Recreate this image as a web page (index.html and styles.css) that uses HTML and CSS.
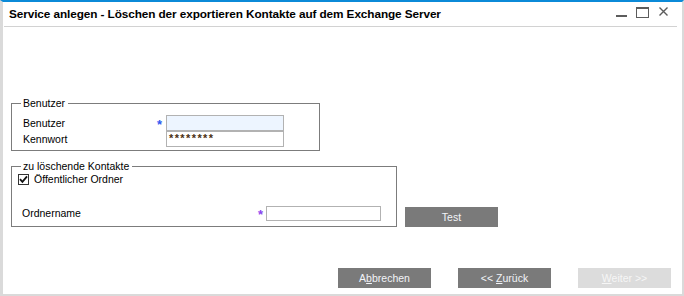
FILE: index.html
```html
<!DOCTYPE html>
<html lang="de">
<head>
    <meta charset="UTF-8">
    <title>Service anlegen</title>
    <link rel="stylesheet" href="styles.css">
</head>
<body>
    <div class="window">
        <div class="titlebar">
            <span class="title">Service anlegen - Löschen der exportieren Kontakte auf dem Exchange Server</span>
            <svg class="controls" width="65" height="24" viewBox="0 0 65 24">
                <rect x="4" y="13" width="11" height="2" fill="#5c5c5c"/>
                <rect x="24.5" y="5.5" width="12" height="10" fill="none" stroke="#5c5c5c"/>
                <rect x="24" y="5" width="13" height="2" fill="#5c5c5c"/>
                <path d="M47.5 5.5 L55.5 13.5 M55.5 5.5 L47.5 13.5" stroke="#5c5c5c" stroke-width="1.4"/>
            </svg>
        </div>

        <div class="content">
            <fieldset class="group group-user">
                <legend>Benutzer</legend>
                <div class="form-grid user-grid">
                    <span class="label">Benutzer</span>
                    <span class="required">*</span>
                    <span class="field field-focus"></span>

                    <span class="label">Kennwort</span>
                    <span></span>
                    <span class="field field-pass">********</span>
                </div>
            </fieldset>

            <div class="contacts-row">
                <fieldset class="group group-contacts">
                    <legend>zu löschende Kontakte</legend>
                    <div class="check-row">
                        <span class="checkbox">
                            <svg width="9" height="9" viewBox="0 0 9 9"><path d="M1 4.2 L3.4 6.8 L8 1.3" fill="none" stroke="#111" stroke-width="1.8"/></svg>
                        </span>
                        <span class="label">Öffentlicher Ordner</span>
                    </div>
                    <div class="form-grid folder-grid">
                        <span class="label">Ordnername</span>
                        <span class="required required-alt">*</span>
                        <span class="field field-folder"></span>
                    </div>
                </fieldset>
                <button class="btn">Test</button>
            </div>

            <div class="footer">
                <button class="btn">A<u>b</u>brechen</button>
                <button class="btn">&lt;&lt; <u>Z</u>urück</button>
                <button class="btn btn-disabled"><u>W</u>eiter &gt;&gt;</button>
            </div>
        </div>
    </div>
</body>
</html>
```

FILE: styles.css
```css
body {
    margin: 0;
    font-family: "Liberation Sans", Arial, sans-serif;
    font-size: 10.5px;
    color: #000;
    background: #fff;
}
.window {
    width: 684px;
    height: 296px;
    box-sizing: border-box;
    border-top: 2px solid #0b8ad8;
    border-left: 3px solid #dadada;
    border-right: 2px solid #dadada;
    border-bottom: 2px solid #dadada;
    background: #fff;
}
.titlebar {
    display: flex;
    align-items: center;
    height: 24px;
    margin: 0 5px 0 1px;
    padding-left: 5px;
    border-bottom: 1px solid #d2d2d2;
}
.title {
    font-weight: bold;
    font-size: 11.8px;
    letter-spacing: -0.1px;
}
.controls {
    margin-left: auto;
    display: block;
}
.content {
    padding: 0 11px 0 8px;
}

/* group boxes */
.group {
    margin: 0;
    border: 1px solid #7c7c7c;
    padding: 0 0 3px 11px;
    box-sizing: border-box;
}
.group legend {
    padding: 0 3px 0 2px;
    margin-left: -2px;
    line-height: 13px;
}
.group-user {
    width: 309px;
    margin-top: 70px;
    padding-top: 5px;
}
.contacts-row {
    display: flex;
    align-items: flex-end;
    gap: 8px;
    margin-top: 9px;
}
.group-contacts {
    width: 386px;
    padding-bottom: 5px;
}

.form-grid {
    display: grid;
    align-items: center;
}
.user-grid {
    grid-template-columns: 134px 9px 118px;
    grid-auto-rows: 16px;
}
.folder-grid {
    grid-template-columns: 236px 8px 115px;
    grid-auto-rows: 15px;
    margin-top: 20px;
    margin-left: -1px;
}
.label {
    line-height: 13px;
}
.required {
    color: #2f58f0;
    font-size: 13px;
    font-weight: bold;
    line-height: 10px;
    padding-top: 3px;
}
.required-alt {
    color: #8a44ee;
}
.field {
    height: 100%;
    box-sizing: border-box;
    border: 1px solid #b2b2b2;
    background: #fff;
}
.field-focus {
    background: #edf5ff;
}
.field-pass {
    padding-left: 2px;
    line-height: 12px;
    color: #4a3010;
    font-size: 11px;
    font-weight: bold;
    letter-spacing: 1.4px;
}

.check-row {
    display: flex;
    align-items: center;
    gap: 5px;
    margin-left: -5px;
    height: 13px;
}
.checkbox {
    width: 11px;
    height: 11px;
    box-sizing: border-box;
    border: 1px solid #333;
    background: #fff;
    display: flex;
    align-items: center;
    justify-content: center;
}
.checkbox svg {
    display: block;
}

/* buttons */
.btn {
    width: 93px;
    height: 20px;
    border: none;
    background: #7a7a7a;
    color: #f2f4f8;
    font-family: "Liberation Sans", Arial, sans-serif;
    font-size: 10.5px;
    padding: 0;
    flex: none;
}
.btn-disabled {
    background: #dcdcdc;
    color: #f6f6f6;
}
.footer {
    display: flex;
    justify-content: flex-end;
    gap: 27px;
    margin-top: 41px;
}
```
